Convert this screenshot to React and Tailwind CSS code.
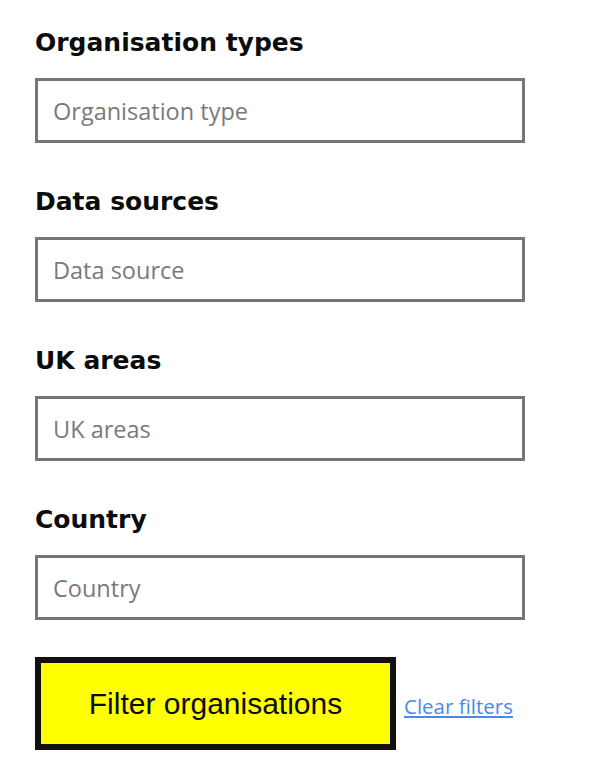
import React from 'react';

const groups = [
  { label: 'Organisation types', placeholder: 'Organisation type' },
  { label: 'Data sources', placeholder: 'Data source' },
  { label: 'UK areas', placeholder: 'UK areas' },
  { label: 'Country', placeholder: 'Country' },
];

export default function App() {
  return (
    <div className="min-h-screen bg-white pl-[35px] pt-[27px]">
      <form className="flex flex-col" onSubmit={(e) => e.preventDefault()}>
        {groups.map((g) => (
          <div key={g.label} className="mb-[43px] flex flex-col">
            <label className="mb-[19px] text-[25px] font-bold leading-[32px] text-[#0b0c0c] [font-family:'DejaVu_Sans',Arial,sans-serif]">
              {g.label}
            </label>
            <input
              type="text"
              placeholder={g.placeholder}
              className="h-[65px] w-[490px] border-[3px] border-[#767676] bg-white pl-[15px] text-[23.5px] text-[#333] outline-none placeholder:text-[#7a7a7a] [font-family:'Open_Sans',sans-serif]"
            />
          </div>
        ))}
        <div className="-mt-[6px] flex items-center">
          <button
            type="submit"
            className="h-[93px] w-[361px] border-[6px] border-[#111] bg-[#ffff00] text-[30px] text-[#0b0c0c] [font-family:'Liberation_Sans',Arial,sans-serif]"
          >
            Filter organisations
          </button>
          <a
            href="#"
            className="ml-[8px] mt-[6px] text-[20.5px] text-[#4a8ae6] underline [font-family:'Open_Sans',sans-serif]"
          >
            Clear filters
          </a>
        </div>
      </form>
    </div>
  );
}
